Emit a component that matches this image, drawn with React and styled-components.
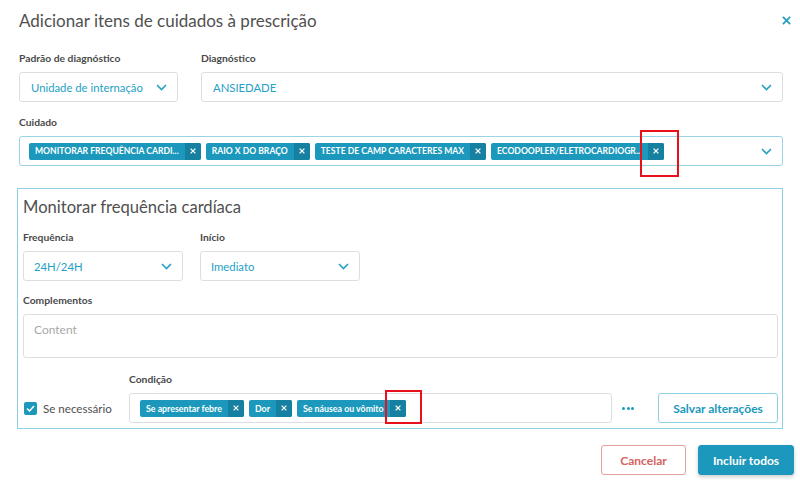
import React from 'react';
import styled, { createGlobalStyle } from 'styled-components';

const GlobalStyle = createGlobalStyle`
    html, body { margin: 0; padding: 0; background: #fff; }
    body { font-family: Lato, "Open Sans", "Liberation Sans", sans-serif; color: #4a4a4a; }
    * { box-sizing: border-box; }
`;

const TEAL = '#1b98bb';
const TEAL_DARK = '#15809f';
const TEAL_TEXT = '#25a0c6';

const Page = styled.div`
    position: relative;
    width: 800px;
    height: 486px;
    padding: 0 17px 0 19px;
`;

const Header = styled.div`
    height: 40px;
    display: flex;
    align-items: center;
    justify-content: space-between;
`;

const Title = styled.h1`
    margin: 0;
    font-size: 17px;
    font-weight: 400;
    color: #505050;
`;

const CloseButton = styled.button`
    border: 0;
    background: none;
    padding: 0;
    margin-right: -8px;
    display: flex;
    cursor: pointer;
`;

const Field = styled.div`
    display: flex;
    flex-direction: column;
    margin-top: ${p => p.top || 0}px;
`;

const Label = styled.label`
    font-size: 10.3px;
    font-weight: 700;
    line-height: 14px;
    color: #4a4a4a;
    margin-bottom: 7px;
`;

const Grid = styled.div`
    display: grid;
    grid-template-columns: ${p => p.cols};
    column-gap: ${p => p.gap}px;
    margin-top: ${p => p.top || 0}px;
`;

const Select = styled.div`
    height: 30px;
    border: 1px solid ${p => p.active ? '#9ad3e3' : '#dcdfe0'};
    border-radius: 3px;
    display: flex;
    align-items: center;
    justify-content: space-between;
    padding: 0 10px 0 ${p => p.padLeft || 10}px;
    font-size: 11.3px;
    color: ${TEAL_TEXT};
    background: #fff;
`;

const Tags = styled.div`
    display: flex;
    gap: ${p => p.gap || 5}px;
    align-items: center;
`;

const Tag = styled.span`
    display: flex;
    height: 17px;
    border-radius: 2px;
    overflow: hidden;
    background: ${TEAL};
    color: #fff;
    font-size: ${p => p.small ? 8.8 : 8.6}px;
    font-weight: 700;
    text-transform: ${p => p.upper ? 'uppercase' : 'none'};
`;

const TagText = styled.span`
    display: flex;
    align-items: center;
    padding: 0 6px;
    white-space: nowrap;
`;

const TagRemove = styled.span`
    width: 16px;
    display: flex;
    align-items: center;
    justify-content: center;
    background: ${TEAL_DARK};
`;

const Panel = styled.div`
    margin: 22px 0 0 -2px;
    border: 1px solid #8ccfe0;
    padding: 7px 4px 5px 5px;
`;

const PanelTitle = styled.h2`
    margin: 0;
    font-size: 16.6px;
    font-weight: 400;
    line-height: 22px;
    color: #505050;
`;

const TextArea = styled.div`
    height: 44px;
    border: 1px solid #dcdfe0;
    border-radius: 3px;
    padding: 7px 10px;
    font-size: 12px;
    color: #a9a9a9;
`;

const BottomRow = styled.div`
    display: flex;
    align-items: flex-end;
    margin-top: 14px;
`;

const CheckWrap = styled.label`
    width: 106px;
    flex-shrink: 0;
    height: 30px;
    display: flex;
    align-items: center;
    gap: 6px;
    font-size: 11.6px;
    color: #505050;
    padding-left: 1px;
`;

const Checkbox = styled.span`
    width: 13px;
    height: 13px;
    border-radius: 2px;
    background: ${TEAL};
    display: flex;
    align-items: center;
    justify-content: center;
`;

const Condition = styled.div`
    width: 483px;
    flex-shrink: 0;
    display: flex;
    flex-direction: column;
`;

const Dots = styled.span`
    width: 12px;
    flex-shrink: 0;
    margin: 0 24px 0 10px;
    height: 30px;
    display: flex;
    align-items: center;
    justify-content: space-between;
`;

const Dot = styled.i`
    width: 3px;
    height: 3px;
    border-radius: 50%;
    background: ${TEAL};
`;

const Button = styled.button`
    height: 30px;
    width: ${p => p.width}px;
    flex-shrink: 0;
    border-radius: 3px;
    font-family: inherit;
    font-size: 12px;
    font-weight: 700;
    cursor: pointer;
    border: 1px solid ${p => p.variant === 'danger' ? '#e3a19e' : p.variant === 'primary' ? TEAL : '#8ccfe0'};
    background: ${p => p.variant === 'primary' ? TEAL : '#fff'};
    color: ${p => p.variant === 'danger' ? '#d5625c' : p.variant === 'primary' ? '#fff' : TEAL};
    box-shadow: ${p => p.variant === 'primary' ? '0 2px 4px rgba(0,0,0,0.2)' : 'none'};
`;

const Footer = styled.div`
    display: flex;
    justify-content: flex-end;
    gap: 12px;
    margin: 16px -11px 0 0;
`;

const Highlight = styled.div`
    position: absolute;
    border: 2px solid #e8101a;
    left: ${p => p.x}px;
    top: ${p => p.y}px;
    width: ${p => p.w}px;
    height: ${p => p.h}px;
`;

const Chevron = () => (
    <svg width="11" height="7" viewBox="0 0 11 7">
        <polyline points="1,1 5.5,5.5 10,1" fill="none" stroke={TEAL_TEXT} strokeWidth="1.6" />
    </svg>
);

const Cross = ({ size = 6, color = '#fff', width = 1.3 }) => (
    <svg width={size} height={size} viewBox="0 0 10 10">
        <path d="M1 1 L9 9 M9 1 L1 9" stroke={color} strokeWidth={width * 10 / size} />
    </svg>
);

function TagItem({ children, ...props }) {
    return (
        <Tag {...props}>
            <TagText>{children}</TagText>
            <TagRemove><Cross /></TagRemove>
        </Tag>
    );
}

const cuidados = [
    'Monitorar frequência cardi...',
    'Raio x do braço',
    'Teste de camp caracteres max',
    'Ecodoopler/eletrocardiogr...'
];

const condicoes = ['Se apresentar febre', 'Dor', 'Se náusea ou vômito'];

function App() {
    return (
        <React.Fragment>
            <GlobalStyle />
            <Page>
                <Header>
                    <Title>Adicionar itens de cuidados à prescrição</Title>
                    <CloseButton><Cross size={9} color={TEAL_TEXT} width={1.8} /></CloseButton>
                </Header>

                <Grid cols="159px 1fr" gap={23} top={11}>
                    <Field>
                        <Label>Padrão de diagnóstico</Label>
                        <Select padLeft={11}>Unidade de internação<Chevron /></Select>
                    </Field>
                    <Field>
                        <Label>Diagnóstico</Label>
                        <Select padLeft={11}>ANSIEDADE<Chevron /></Select>
                    </Field>
                </Grid>

                <Field top={13}>
                    <Label>Cuidado</Label>
                    <Select active padLeft={9}>
                        <Tags gap={5}>
                            {cuidados.map(c => <TagItem key={c} upper>{c}</TagItem>)}
                        </Tags>
                        <Chevron />
                    </Select>
                </Field>

                <Panel>
                    <PanelTitle>Monitorar frequência cardíaca</PanelTitle>
                    <Grid cols="160px 160px" gap={17} top={12}>
                        <Field>
                            <Label>Frequência</Label>
                            <Select>24H/24H<Chevron /></Select>
                        </Field>
                        <Field>
                            <Label>Início</Label>
                            <Select>Imediato<Chevron /></Select>
                        </Field>
                    </Grid>
                    <Field top={12}>
                        <Label>Complementos</Label>
                        <TextArea>Content</TextArea>
                    </Field>
                    <BottomRow>
                        <CheckWrap>
                            <Checkbox>
                                <svg width="9" height="7" viewBox="0 0 9 7">
                                    <polyline points="1,3.5 3.5,6 8,1" fill="none" stroke="#fff" strokeWidth="1.5" />
                                </svg>
                            </Checkbox>
                            Se necessário
                        </CheckWrap>
                        <Condition>
                            <Label>Condição</Label>
                            <Select>
                                <Tags gap={5}>
                                    {condicoes.map(c => <TagItem key={c} small>{c}</TagItem>)}
                                </Tags>
                            </Select>
                        </Condition>
                        <Dots><Dot /><Dot /><Dot /></Dots>
                        <Button width={120}>Salvar alterações</Button>
                    </BottomRow>
                </Panel>

                <Footer>
                    <Button width={85} variant="danger">Cancelar</Button>
                    <Button width={96} variant="primary">Incluir todos</Button>
                </Footer>

                <Highlight x={640} y={130} w={39} h={47} />
                <Highlight x={385} y={390} w={37} h={34} />
            </Page>
        </React.Fragment>
    );
}

export default App;
